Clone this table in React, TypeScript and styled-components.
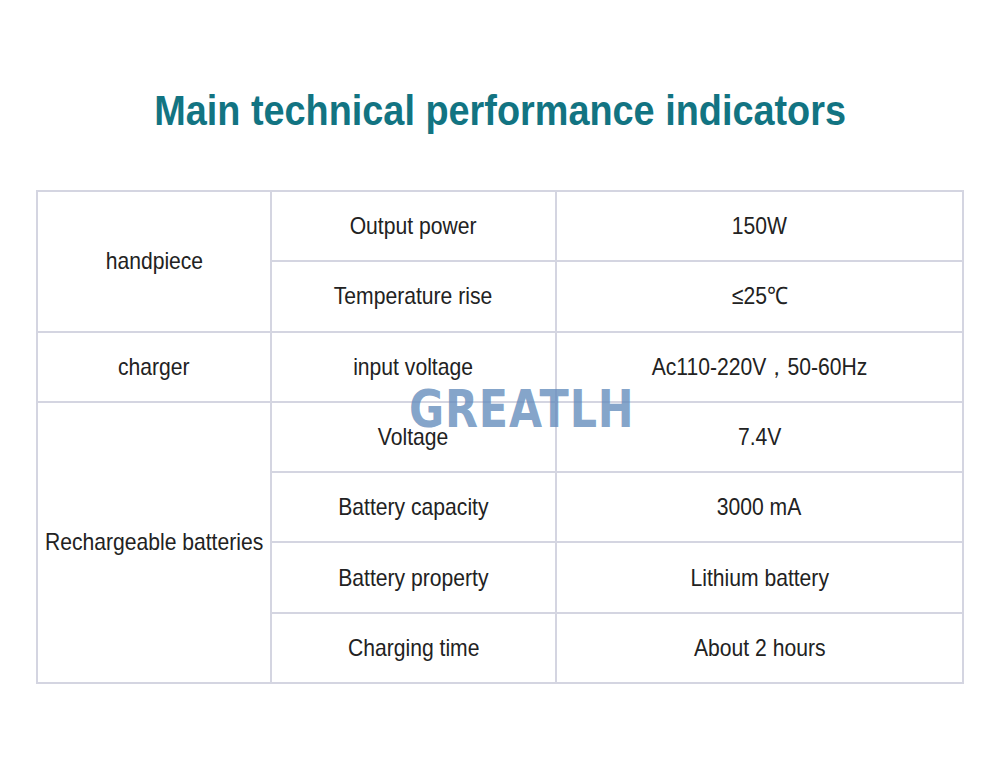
import React, { FC } from 'react';
import styled, { createGlobalStyle } from 'styled-components';

interface Spec {
  item: string;
  value: string;
}

interface Group {
  name: string;
  specs: Spec[];
}

const GROUPS: Group[] = [
  {
    name: 'handpiece',
    specs: [
      { item: 'Output power', value: '150W' },
      { item: 'Temperature rise', value: '≤25℃' },
    ],
  },
  {
    name: 'charger',
    specs: [{ item: 'input voltage', value: 'Ac110-220V，50-60Hz' }],
  },
  {
    name: 'Rechargeable batteries',
    specs: [
      { item: 'Voltage', value: '7.4V' },
      { item: 'Battery capacity', value: '3000 mA' },
      { item: 'Battery property', value: 'Lithium battery' },
      { item: 'Charging time', value: 'About 2 hours' },
    ],
  },
];

const App: FC = () => {
  return (
    <Page>
      <GlobalStyle />
      <Title>
        <Squeezed>Main technical performance indicators</Squeezed>
      </Title>
      <TableWrap>
        <SpecTable>
          <colgroup>
            <col style={{ width: 234 }} />
            <col style={{ width: 285 }} />
            <col style={{ width: 407 }} />
          </colgroup>
          <tbody>
            {GROUPS.map((group) =>
              group.specs.map((spec, i) => (
                <Row key={group.name + spec.item}>
                  {i === 0 && (
                    <Cell rowSpan={group.specs.length}>
                      <Squeezed>{group.name}</Squeezed>
                    </Cell>
                  )}
                  <Cell>
                    <Squeezed>{spec.item}</Squeezed>
                  </Cell>
                  <Cell>
                    <Squeezed>{spec.value}</Squeezed>
                  </Cell>
                </Row>
              )),
            )}
          </tbody>
        </SpecTable>
        <Watermark>GREATLH</Watermark>
      </TableWrap>
    </Page>
  );
};

const GlobalStyle = createGlobalStyle`
  html, body {
    margin: 0;
    padding: 0;
    background: #fff;
  }
  body {
    font-family: "Liberation Sans", Arial, sans-serif;
    color: #1c1c1c;
  }
`;

const Page = styled.div`
  width: 1000px;
  height: 772px;
  overflow: hidden;
  background: #fff;
`;

const Squeezed = styled.span`
  display: inline-block;
  margin: 0 -40px;
  transform: scaleX(0.88);
  white-space: nowrap;
`;

const Title = styled.h1`
  margin: 0;
  padding-top: 89px;
  text-align: center;
  font-size: 43px;
  line-height: 43px;
  font-weight: 700;
  color: #127482;
`;

const TableWrap = styled.div`
  position: relative;
  width: 926px;
  margin: 58px 0 0 36px;
`;

const SpecTable = styled.table`
  width: 926px;
  border-collapse: collapse;
  table-layout: fixed;
  border: 2px solid #d4d5e1;
`;

const Row = styled.tr`
  height: 70.3px;
`;

const Cell = styled.td`
  border: 2px solid #d4d5e1;
  padding: 0;
  text-align: center;
  vertical-align: middle;
  font-size: 24px;
  line-height: 28px;
  color: #222;
`;

const Watermark = styled.div`
  position: absolute;
  left: 373px;
  top: 194px;
  font-family: "DejaVu Sans", sans-serif;
  font-weight: 700;
  font-size: 51px;
  line-height: 51px;
  letter-spacing: 1px;
  color: rgba(100, 140, 188, 0.8);
  transform: scaleX(0.84);
  transform-origin: left top;
  pointer-events: none;
`;

export default App;
